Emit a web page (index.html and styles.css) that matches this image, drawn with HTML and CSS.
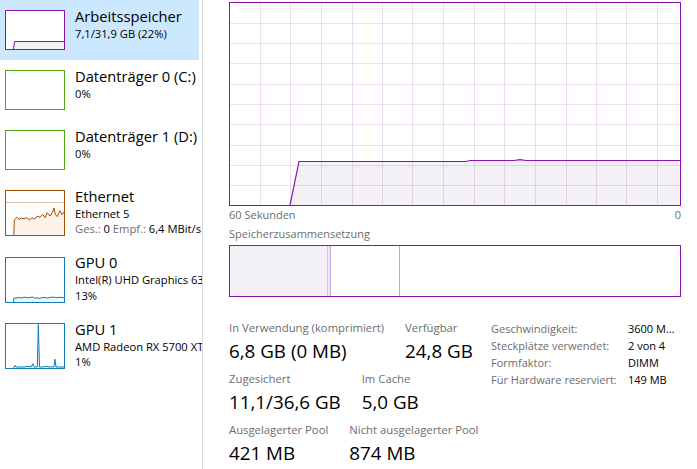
FILE: index.html
```html
<!DOCTYPE html>
<html lang="de">
<head>
<meta charset="utf-8">
<title>Arbeitsspeicher</title>
<link rel="stylesheet" href="styles.css">
</head>
<body>
<div class="app">
  <aside class="sidebar">
    <div class="item selected">
      <svg class="thumb" width="60" height="40" viewBox="0 0 60 40">
        <rect x="0.5" y="0.5" width="59" height="39" fill="#fff" stroke="#8b12ae"/>
        <polygon points="8.5,39 9.5,31.5 59,31.5 59,39" fill="#f3f1f5"/>
        <polyline points="8.5,39 9.5,31.5 59,31.5" fill="none" stroke="#8b12ae" stroke-width="1"/>
      </svg>
      <div class="info">
        <div class="title">Arbeitsspeicher</div>
        <div class="sub">7,1/31,9 GB (22%)</div>
      </div>
    </div>
    <div class="item">
      <svg class="thumb" width="60" height="40" viewBox="0 0 60 40">
        <rect x="0.5" y="0.5" width="59" height="39" fill="#fff" stroke="#4da60c"/>
      </svg>
      <div class="info">
        <div class="title">Datenträger 0 (C:)</div>
        <div class="sub">0%</div>
      </div>
    </div>
    <div class="item">
      <svg class="thumb" width="60" height="40" viewBox="0 0 60 40">
        <rect x="0.5" y="0.5" width="59" height="39" fill="#fff" stroke="#4da60c"/>
      </svg>
      <div class="info">
        <div class="title">Datenträger 1 (D:)</div>
        <div class="sub">0%</div>
      </div>
    </div>
    <div class="item">
      <svg class="thumb" width="60" height="46" viewBox="0 0 60 46">
        <rect x="0.5" y="0.5" width="59" height="45" fill="#fff" stroke="#a74f01"/>
        <line x1="1" y1="12.5" x2="59" y2="12.5" stroke="#e3c3a6" stroke-width="1"/>
        <polygon points="8.8,45 9.3,29.7 11.7,27.3 14.3,29.3 16.3,28 19,28.7 21.7,27.7 24.3,30 27,27.7 29.7,29 32.3,26 35,27.3 37.7,24.3 40,27.7 42.3,22.7 45,26 47.7,21.7 49,18 50.3,24.3 52.3,26.7 55,20.7 57,24.7 59,21.7 59,45" fill="#fcf3eb"/>
        <polyline points="8.8,45 9.3,29.7 11.7,27.3 14.3,29.3 16.3,28 19,28.7 21.7,27.7 24.3,30 27,27.7 29.7,29 32.3,26 35,27.3 37.7,24.3 40,27.7 42.3,22.7 45,26 47.7,21.7 49,18 50.3,24.3 52.3,26.7 55,20.7 57,24.7 59,21.7" fill="none" stroke="#a74f01" stroke-width="1"/>
      </svg>
      <div class="info">
        <div class="title">Ethernet</div>
        <div class="sub">Ethernet 5</div>
        <div class="sub"><span class="muted">Ges.:</span> 0 <span class="muted">Empf.:</span> 6,4 MBit/s</div>
      </div>
    </div>
    <div class="item">
      <svg class="thumb" width="60" height="46" viewBox="0 0 60 46">
        <rect x="0.5" y="0.5" width="59" height="45" fill="#fff" stroke="#117dbb"/>
        <polygon points="8.5,45 9,41 12,41 14,40.5 17,41 19,40 22,40.8 25,40.5 28,40 30,41.5 32,40.5 34,41.5 36,40.8 39,40.3 42,41 45,40.5 48,40 51,40.7 54,40.2 57,40.6 59,40.5 59,45" fill="#f1f6fa"/>
        <polyline points="8.5,45 9,41 12,41 14,40.5 17,41 19,40 22,40.8 25,40.5 28,40 30,41.5 32,40.5 34,41.5 36,40.8 39,40.3 42,41 45,40.5 48,40 51,40.7 54,40.2 57,40.6 59,40.5" fill="none" stroke="#117dbb" stroke-width="1"/>
      </svg>
      <div class="info">
        <div class="title">GPU 0</div>
        <div class="sub">Intel(R) UHD Graphics 630</div>
        <div class="sub">13%</div>
      </div>
    </div>
    <div class="item">
      <svg class="thumb" width="60" height="46" viewBox="0 0 60 46">
        <rect x="0.5" y="0.5" width="59" height="45" fill="#fff" stroke="#117dbb"/>
        <polygon points="8.5,45 9,44 10,42.3 11,44 20,44 22,43.3 26,44 28,40.7 29,44 32.3,44 33.3,1.5 34.5,44 38,44 41,43.3 45,44 49,43.8 50,36.3 51,44 59,44 59,45" fill="#f1f6fa"/>
        <polyline points="8.5,45 9,44 10,42.3 11,44 20,44 22,43.3 26,44 28,40.7 29,44 32.3,44 33.3,1.5 34.5,44 38,44 41,43.3 45,44 49,43.8 50,36.3 51,44 59,44" fill="none" stroke="#117dbb" stroke-width="1"/>
      </svg>
      <div class="info">
        <div class="title">GPU 1</div>
        <div class="sub">AMD Radeon RX 5700 XT</div>
        <div class="sub">1%</div>
      </div>
    </div>
  </aside>

  <main class="main">
    <div class="graph">
      <svg width="450" height="202" viewBox="0 0 450 202">
        <polygon points="60,202 69,158.5 236,158.5 240,157.5 284,157.5 290,156.6 296,157.5 450,157.5 450,202" fill="#f3f1f5"/>
        <path d="M30.5 0V202M60.5 0V202M91.5 0V202M122.5 0V202M152.5 0V202M182.5 0V202M213.5 0V202M244.5 0V202M274.5 0V202M305.5 0V202M336.5 0V202M366.5 0V202M396.5 0V202M427.5 0V202M0 20.5H450M0 40.5H450M0 60.5H450M0 81.5H450M0 101.5H450M0 121.5H450M0 142.5H450M0 162.5H450M0 182.5H450" stroke="rgba(139,18,174,0.14)" stroke-width="1" fill="none"/>
        <polyline points="60,202 69,158.5 236,158.5 240,157.5 284,157.5 290,156.6 296,157.5 450,157.5" fill="none" stroke="#8b12ae" stroke-width="1.2"/>
      </svg>
    </div>
    <div class="axis"><span>60 Sekunden</span><span>0</span></div>
    <div class="caption">Speicherzusammensetzung</div>
    <div class="comp">
      <div class="c-inuse"></div>
      <div class="c-mod"></div>
      <div class="c-standby"></div>
      <div class="c-free"></div>
    </div>
    <div class="stats">
      <div class="big">
        <div class="row">
          <div class="stat"><div class="lbl">In Verwendung (komprimiert)</div><div class="val">6,8 GB (0 MB)</div></div>
          <div class="stat"><div class="lbl">Verfügbar</div><div class="val">24,8 GB</div></div>
        </div>
        <div class="row">
          <div class="stat"><div class="lbl">Zugesichert</div><div class="val">11,1/36,6 GB</div></div>
          <div class="stat"><div class="lbl">Im Cache</div><div class="val">5,0 GB</div></div>
        </div>
        <div class="row">
          <div class="stat"><div class="lbl">Ausgelagerter Pool</div><div class="val">421 MB</div></div>
          <div class="stat"><div class="lbl">Nicht ausgelagerter Pool</div><div class="val">874 MB</div></div>
        </div>
      </div>
      <div class="props">
        <div class="pk">Geschwindigkeit:</div><div class="pv">3600 MHz</div>
        <div class="pk">Steckplätze verwendet:</div><div class="pv">2 von 4</div>
        <div class="pk">Formfaktor:</div><div class="pv">DIMM</div>
        <div class="pk">Für Hardware reserviert:</div><div class="pv">149 MB</div>
      </div>
    </div>
  </main>
</div>
</body>
</html>
```

FILE: styles.css
```css
* { box-sizing: border-box; }

html, body {
  margin: 0;
  padding: 0;
  background: #fff;
}

body {
  font-family: "Open Sans", "Noto Sans", sans-serif;
  color: #000;
  overflow: hidden;
}

.app {
  display: flex;
  height: 469px;
}

/* ---------- sidebar ---------- */
.sidebar {
  width: 203px;
  flex: none;
  border-right: 1px solid #d9d9d9;
  overflow: hidden;
}

.item {
  display: flex;
  align-items: flex-start;
  gap: 10px;
  width: 199px;
  padding: 10px 0 10px 5px;
  white-space: nowrap;
}

.item.selected {
  background: #cce8ff;
}

.thumb {
  display: block;
  flex: none;
  shape-rendering: geometricPrecision;
}

.info {
  margin-top: -3.5px;
  font-size: 11.2px;
  line-height: 15.5px;
}

.title {
  font-size: 14.7px;
  line-height: 19px;
}

.muted {
  color: #6d6d6d;
}

/* ---------- main ---------- */
.main {
  flex: 1;
  padding: 2px 0 0 26px;
}

.graph {
  width: 452px;
  height: 204px;
  border: 1px solid #8b12ae;
}

.graph svg {
  display: block;
}

.axis {
  width: 452px;
  display: flex;
  justify-content: space-between;
  margin-top: 1px;
  font-size: 11px;
  line-height: 16px;
  color: #6d6d6d;
}

.caption {
  margin-top: 3px;
  font-size: 11px;
  line-height: 16px;
  color: #6d6d6d;
}

.comp {
  display: flex;
  width: 452px;
  height: 52px;
  margin-top: 3px;
  border: 1px solid #8b12ae;
}

.c-inuse {
  width: 98px;
  background: #f3f1f5;
  border-right: 1px solid #dcc8e5;
}

.c-mod {
  width: 3px;
  background: #efe7f2;
  border-right: 1px solid #c9a4da;
}

.c-standby {
  width: 69px;
  border-right: 1px solid #c9a4da;
}

.c-free {
  flex: 1;
}

/* ---------- stats ---------- */
.stats {
  display: flex;
  width: 452px;
  margin-top: 23px;
}

.big {
  width: 262px;
  flex: none;
  display: flex;
  flex-direction: column;
  gap: 8.2px;
}

.row {
  display: flex;
  gap: 21px;
}

.lbl {
  font-size: 11.3px;
  line-height: 16px;
  color: #6d6d6d;
  white-space: nowrap;
}

.val {
  margin-top: 3px;
  font-size: 18.8px;
  line-height: 24px;
  white-space: nowrap;
}

.props {
  display: grid;
  grid-template-columns: 137px 48px;
  align-content: start;
  font-size: 11px;
  line-height: 17.1px;
}

.pk {
  color: #6d6d6d;
  white-space: nowrap;
}

.pv {
  color: #000;
  white-space: nowrap;
  overflow: hidden;
  text-overflow: ellipsis;
}
```
